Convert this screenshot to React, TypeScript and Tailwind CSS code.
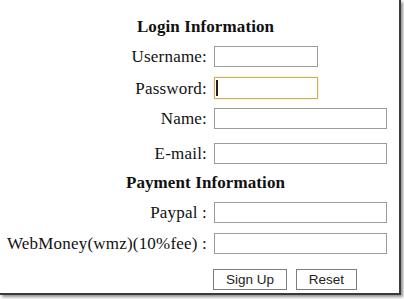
import React from "react";

const serif = { fontFamily: '"Liberation Serif", "Times New Roman", serif' };

function Row({ label, wide, focused, mt }: { label: string; wide?: boolean; focused?: boolean; mt: string }) {
  return (
    <div className={`flex items-center ${mt}`}>
      <div className="w-[207px] shrink-0 text-right text-[17px] leading-[21px] tracking-[0.2px] text-[#111] whitespace-nowrap">{label}</div>
      <div className="ml-[7px]">
        {focused ? (
          <div className="relative h-[22px] w-[104px] border border-[#d4ae55] bg-white shadow-[0_0_2px_#f0d9a0]">
            <div className="absolute left-[1px] top-[2px] h-[16px] w-[2px] bg-[#222]" />
          </div>
        ) : (
          <div className={`h-[21px] ${wide ? "w-[173px]" : "w-[104px]"} border border-[#9c9c9c] bg-white`} />
        )}
      </div>
    </div>
  );
}

export default function App() {
  return (
    <div className="w-[404px] h-[299px] bg-white overflow-hidden" style={serif}>
      <div className="w-[401px] h-[295px] border-r-2 border-b-2 border-[#3a3a3a] shadow-[2px_2px_3px_rgba(0,0,0,0.45)] bg-white">
        <div className="flex flex-col pt-[17px]">
          <div className="pl-[12px] text-center text-[17px] font-bold leading-[20px] tracking-[0.1px] text-[#111]">Login Information</div>
          <Row label="Username:" mt="mt-[9px]" />
          <Row label="Password:" focused mt="mt-[10px]" />
          <Row label="Name:" wide mt="mt-[9px]" />
          <Row label="E-mail:" wide mt="mt-[14px]" />
          <div className="mt-[9px] pl-[12px] text-center text-[17px] font-bold leading-[20px] tracking-[0.1px] text-[#111]">Payment Information</div>
          <Row label="Paypal :" wide mt="mt-[9px]" />
          <Row label="WebMoney(wmz)(10%fee) :" wide mt="mt-[10px]" />
          <div className="mt-[15px] flex pl-[213px] gap-[9px]" style={{ fontFamily: '"Liberation Sans", Arial, sans-serif' }}>
            <button className="h-[21px] w-[74px] border border-[#7d7d7d] bg-white text-[13.5px] leading-[19px] text-[#222]">Sign Up</button>
            <button className="h-[21px] w-[61px] border border-[#7d7d7d] bg-white text-[13.5px] leading-[19px] text-[#222]">Reset</button>
          </div>
        </div>
      </div>
    </div>
  );
}
